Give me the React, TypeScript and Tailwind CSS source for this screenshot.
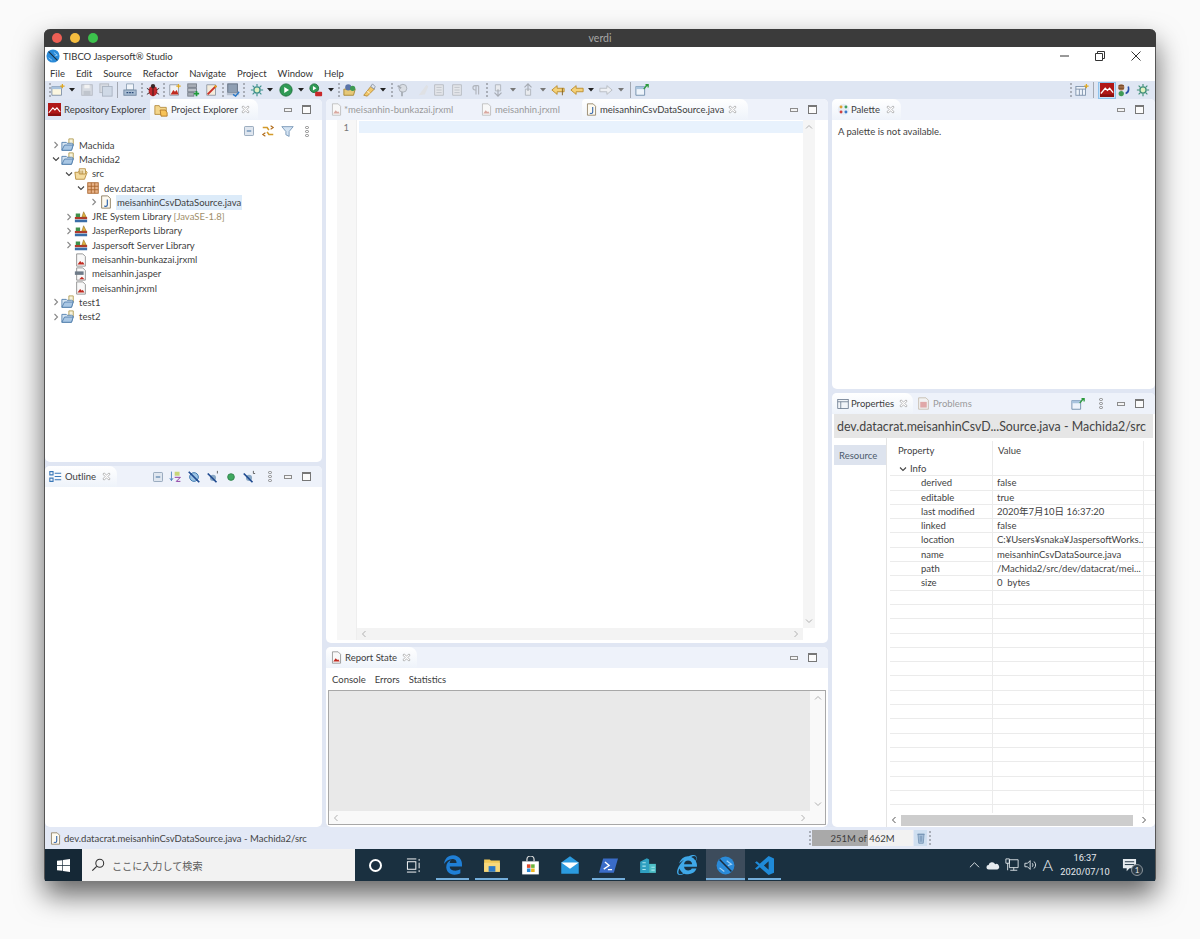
import type { ReactNode } from "react";
import { FaEdgeLegacy, FaInternetExplorer } from "react-icons/fa6";

const FONT = "font-['Lato','Noto_Sans_CJK_JP',sans-serif]";

function Ico({ children, size = 14, className = "" }: { children: ReactNode; size?: number; className?: string }) {
  return (
    <svg viewBox="0 0 16 16" width={size} height={size} className={`shrink-0 ${className}`} fill="none">
      {children}
    </svg>
  );
}

/* ---------- eclipse icons ---------- */
const Mountain = ({ size = 14, className = "" }: { size?: number; className?: string }) => (
  <Ico size={size} className={className}>
    <rect x="0" y="0" width="16" height="16" fill="#b01818" />
    <path d="M1 12 L6 6 L8.5 8.5 L11 6 L15 11" stroke="#fff" strokeWidth="1.4" />
    <rect x="0" y="13" width="16" height="3" fill="#8a1010" />
  </Ico>
);
const HandFolder = () => (
  <Ico>
    <path d="M1 3h5l1 2h7v8H1z" fill="#f3d68c" stroke="#b48a3c" />
    <path d="M7 8h6l2 3v4H8z" fill="#f7c35a" stroke="#b0772a" />
  </Ico>
);
const JavaFile = ({ size = 14 }: { size?: number }) => (
  <Ico size={size}>
    <path d="M3 1h7l3 3v11H3z" fill="#fdfaf0" stroke="#8a7a5c" />
    <path d="M9.5 5v6.5q0 1.5-2 1.5-1 0-1.500-.7" stroke="#2a5fa8" strokeWidth="1.3" />
  </Ico>
);
const ReportFile = ({ gray = false, size = 14 }: { gray?: boolean; size?: number }) => (
  <Ico size={size}>
    <path d="M3 1h7l3 3v11H3z" fill="#f8f8f8" stroke={gray ? "#b9b9b9" : "#8d8d8d"} />
    <path d="M4 13l3-4 2 2 1-1 2 3z" fill={gray ? "#d9a8a0" : "#c02a20"} />
  </Ico>
);
const JasperFile = () => (
  <Ico>
    <path d="M3 1h7l3 3v11H3z" fill="#f8f8f8" stroke="#8d8d8d" />
    <rect x="1" y="5" width="10" height="4" fill="#6f7b88" />
    <path d="M6 14l3-3 3 3z" fill="#c02a20" />
  </Ico>
);
const ProjectFolder = () => (
  <Ico>
    <path d="M9 1h5v7H9z" fill="#f7f3dc" stroke="#b09a50" />
    <path d="M1 5h5l1 1h5l2 1-2 7H1z" fill="#d5e4f2" stroke="#4f7daa" />
    <path d="M1 14l3-6h10l-2 6z" fill="#a9c7e4" stroke="#4f7daa" />
  </Ico>
);
const SrcFolder = () => (
  <Ico>
    <path d="M1 6h4l1-2h7l2 2-3 8H2z" fill="#f4dca0" stroke="#b58a3a" />
    <path d="M6 2h7v6H6z" fill="#f9efd0" stroke="#b58a3a" />
    <path d="M8 4v4M10 4v4" stroke="#b58a3a" />
  </Ico>
);
const PackageIcon = () => (
  <Ico>
    <rect x="2" y="2" width="12" height="12" fill="#e8b48a" stroke="#a8642c" />
    <path d="M6 2v12M10 2v12M2 6h12M2 10h12" stroke="#a8642c" />
  </Ico>
);
const LibIcon = () => (
  <Ico>
    <rect x="1" y="8" width="14" height="2.500" fill="#b23a2a" />
    <rect x="1" y="11" width="14" height="3" fill="#3a6ea8" />
    <path d="M9 8l2-6 3 6z" fill="#e0b040" stroke="#8a6a20" strokeWidth=".6" />
    <rect x="2" y="4" width="5" height="4" fill="#3f8f4a" />
  </Ico>
);
const Chevron = ({ open = false }: { open?: boolean }) => (
  <svg viewBox="0 0 8 8" width="8" height="8" fill="none" className="shrink-0">
    <path d={open ? "M1 2.500 L4 5.500 L7 2.500" : "M2.500 1 L5.500 4 L2.500 7"} stroke={open ? "#444" : "#888"} strokeWidth="1.100" />
  </svg>
);
const Close = () => (
  <svg viewBox="0 0 10 10" width="9" height="9" fill="none" className="shrink-0 ml-auto">
    <path d="M1.500 1.500h1.500L5 3.500 7 1.500h1.500v1.500L6.500 5l2 2v1.500H7L5 6.500 3 8.500H1.500V7l2-2-2-2z" stroke="#9a9a9a" strokeWidth=".8" fill="#fff" />
  </svg>
);
const MinMax = ({ className = "" }: { className?: string }) => (
  <div className={`flex items-center gap-[10px] ${className}`}>
    <div className="w-[8px] h-[4px] border border-[#8c8c8c] bg-[#f4f4f4]" />
    <div className="w-[9px] h-[9px] border border-[#777] border-t-2 bg-[#fbfbfb]" />
  </div>
);
const Kebab = ({ className = "" }: { className?: string }) => (
  <div className={`flex flex-col gap-[1px] ${className}`}>
    <div className="w-[4px] h-[3px] rounded-full border border-[#888]" />
    <div className="w-[4px] h-[3px] rounded-full border border-[#888]" />
    <div className="w-[4px] h-[3px] rounded-full border border-[#888]" />
  </div>
);
const Collapse = () => (
  <Ico size={12}>
    <rect x="2" y="2" width="12" height="12" rx="1" fill="#dfe6ef" stroke="#8197ad" />
    <path d="M5 8h6" stroke="#3f6f9f" strokeWidth="1.500" />
  </Ico>
);
const Link = () => (
  <Ico size={14}>
    <path d="M2 4h5l2 3M14 12H9L7 9" stroke="#d39a2a" strokeWidth="1.800" />
    <path d="M11 2l3 2-3 2M5 10l-3 2 3 2" stroke="#b06a18" strokeWidth="1.200" />
  </Ico>
);
const Filter = () => (
  <Ico size={13}>
    <path d="M1 2h14L10 8v6l-4-2V8z" fill="#d3e3f2" stroke="#6c8fb2" />
  </Ico>
);
const NewPin = () => (
  <Ico>
    <path d="M1 4h10v10H1z" fill="#eef4fb" stroke="#6d8aa8" />
    <path d="M1 4h10v3H1z" fill="#a9c4de" />
    <path d="M10 7l4-5M12 2h3v3" stroke="#2c9a3c" strokeWidth="1.500" />
  </Ico>
);

/* ---------- toolbar ---------- */
const Handle = ({ className = "" }: { className?: string }) => (
  <div className={`w-[2px] h-[14px] shrink-0 border-l-2 border-dotted border-[#a9aeb8] ${className}`} />
);
const Sep = ({ className = "" }: { className?: string }) => <div className={`w-[1px] h-[16px] shrink-0 bg-[#a3a8b2] ${className}`} />;
const Drop = ({ className = "", dim = false }: { className?: string; dim?: boolean }) => (
  <svg viewBox="0 0 6 4" width="6" height="4" className={`shrink-0 ${className}`}>
    <path d="M0 0h6L3 3.500z" fill={dim ? "#777" : "#222"} />
  </svg>
);
const T = ({ className = "", children }: { className?: string; children: ReactNode }) => (
  <div className={`w-[14px] h-[14px] shrink-0 ${className}`}>{children}</div>
);
const Gear = ({ c = "#3c8f8a" }: { c?: string }) => (
  <Ico>
    <circle cx="8" cy="8" r="3.500" fill="#dff0c0" stroke={c} strokeWidth="1.500" />
    <path d="M8 1v3M8 12v3M1 8h3M12 8h3M3 3l2 2M11 11l2 2M13 3l-2 2M5 11l-2 2" stroke={c} strokeWidth="1.300" />
  </Ico>
);
const DiskIcon = () => (
  <Ico>
    <rect x="2" y="2" width="12" height="12" fill="#d7dbe2" stroke="#b3b8c1" />
    <rect x="5" y="2" width="6" height="4" fill="#f2f2f2" />
    <rect x="4" y="9" width="8" height="5" fill="#c0c5cd" />
  </Ico>
);
const GrayDoc = () => (
  <Ico>
    <path d="M3 2h10v12H3z" fill="#e4e6ea" stroke="#b5b9c0" />
    <path d="M5 5h6M5 8h6M5 11h6" stroke="#bcc0c7" />
  </Ico>
);
const Arrow = ({ dir, on = true }: { dir: "l" | "r"; on?: boolean }) => (
  <Ico>
    <path
      d={dir === "l" ? "M1 8l6-5v3h8v4H7v3z" : "M15 8L9 3v3H1v4h8v3z"}
      fill={on ? "#f5d27a" : "#eef0f4"}
      stroke={on ? "#b98a2a" : "#b5b9c0"}
    />
  </Ico>
);

function Toolbar() {
  return (
    <div className="flex items-center h-[18px] bg-[#dfe6f3]">
      <Handle className="ml-[4px]" />
      <T><Ico><path d="M1 4h11v10H1z" fill="#fbf6e0" stroke="#7e8fa6" /><path d="M1 4h11v3H1z" fill="#a8c2de" /><path d="M13 1v5M10.500 3.500h5" stroke="#e0a820" strokeWidth="1.400" /></Ico></T>
      <Drop className="ml-[4px]" />
      <T className="ml-[5px]"><DiskIcon /></T>
      <T className="ml-[5px]"><Ico><rect x="1" y="1" width="10" height="10" fill="#d7dbe2" stroke="#b3b8c1" /><rect x="4" y="4" width="11" height="11" fill="#cfd9e6" stroke="#a8b2c0" /></Ico></T>
      <Sep className="ml-[4px]" />
      <T className="ml-[5px]"><Ico><path d="M4 1h8v7H4z" fill="#f0f4fa" stroke="#8ea0b5" /><rect x="1" y="8" width="14" height="6" fill="#a9bdd3" stroke="#6f86a0" /><path d="M4 11h8" stroke="#2a4a78" strokeWidth="1.500" strokeDasharray="2 1" /></Ico></T>
      <Handle className="ml-[4px]" />
      <T className="ml-[3px]"><Ico><ellipse cx="8" cy="9" rx="5" ry="6" fill="#c0282c" /><circle cx="8" cy="3.500" r="2.500" fill="#3a2a2a" /><path d="M8 4v11M1 6l3 2M15 6l-3 2M1 13l3-2M15 13l-3-2" stroke="#2a1a1a" /></Ico></T>
      <Handle className="ml-[3px]" />
      <T className="ml-[3px]"><Ico><path d="M2 2h10v12H2z" fill="#f2f3f5" stroke="#8d96a3" /><path d="M3 13l3-5 2 2 2-2 2 5z" fill="#c02a20" /><path d="M12 1v5M9.500 3.500h5" stroke="#e0a820" strokeWidth="1.300" /></Ico></T>
      <T className="ml-[4px]"><Ico><rect x="2" y="1" width="10" height="4" fill="#a7adb6" stroke="#757c87" /><rect x="2" y="6" width="10" height="4" fill="#b9bec6" stroke="#757c87" /><rect x="2" y="11" width="7" height="4" fill="#a7adb6" stroke="#757c87" /><path d="M12 9v6M9 12h6" stroke="#1f9a3a" strokeWidth="2" /></Ico></T>
      <T className="ml-[5px]"><Ico><path d="M2 2h10v12H2z" fill="#f4ecdc" stroke="#8d96a3" /><path d="M3 13l10-10" stroke="#c8322a" strokeWidth="2.200" /><path d="M11 3l2 2" stroke="#e0a820" strokeWidth="2" /></Ico></T>
      <Handle className="ml-[3px]" />
      <T className="ml-[2px]"><Ico><rect x="2" y="1" width="11" height="10" fill="#8f9fb3" stroke="#5d6a7d" /><rect x="1" y="11" width="14" height="3" fill="#b7c1cf" /><path d="M8 13l3 2 4-5" stroke="#2a78c8" strokeWidth="1.600" /></Ico></T>
      <Handle className="ml-[3px]" />
      <T className="ml-[5px]"><Gear /></T>
      <Drop className="ml-[3px]" />
      <T className="ml-[6px]"><Ico><circle cx="8" cy="8" r="7" fill="#2f9a55" stroke="#1e6f3c" /><path d="M6 4.500l5.500 3.500L6 11.500z" fill="#fff" /></Ico></T>
      <Drop className="ml-[5px]" />
      <T className="ml-[5px]"><Ico><circle cx="6" cy="6" r="5" fill="#2f9a55" stroke="#1e6f3c" /><path d="M4.500 3.500l4 2.500-4 2.500z" fill="#fff" /><rect x="7" y="10" width="8" height="5" rx="1" fill="#c8282a" /></Ico></T>
      <Drop className="ml-[5px]" />
      <Handle className="ml-[4px]" />
      <T className="ml-[3px]"><Ico><path d="M1 7h13l-2 7H1z" fill="#e6c878" stroke="#a5842f" /><circle cx="6" cy="5" r="3.500" fill="#5a74a8" /><circle cx="11" cy="6" r="3" fill="#3f9a55" /></Ico></T>
      <T className="ml-[5px]"><Ico><path d="M2 14L10 4l4 3-8 8z" fill="#f2c86a" stroke="#b58a3a" /><path d="M10 4l2-3 3 3-1 3z" fill="#dfe4ec" stroke="#8c95a3" /><path d="M6 9l3 3" stroke="#fff" /></Ico></T>
      <Drop className="ml-[4px]" />
      <Handle className="ml-[5px]" />
      <T className="ml-[2px]"><Ico><circle cx="9" cy="6" r="4.500" fill="#d9dde3" stroke="#a6abb3" /><path d="M8 10v5M3 3l4 3" stroke="#a6abb3" strokeWidth="2" /></Ico></T>
      <T className="ml-[7px]"><Ico><path d="M3 14L12 2l2 2-4 9z" fill="#dfe1e5" /></Ico></T>
      <T className="ml-[2px]"><GrayDoc /></T>
      <T className="ml-[4px]"><GrayDoc /></T>
      <T className="ml-[5px]"><Ico><path d="M11 3v10M8 3v10M11 3H7a2.500 2.500 0 000 5h1" stroke="#b0b4bb" strokeWidth="1.300" /></Ico></T>
      <Handle className="ml-[3px]" />
      <T className="ml-[3px]"><Ico><path d="M5 2h6v7H5z" fill="#e8eaee" stroke="#adb2ba" /><path d="M8 7v7M4 11l4 4 4-4" stroke="#a6abb3" strokeWidth="1.300" /></Ico></T>
      <Drop dim className="ml-[5px]" />
      <T className="ml-[5px]"><Ico><path d="M5 7h6v7H5z" fill="#e8eaee" stroke="#adb2ba" /><path d="M8 9V2M4 5l4-4 4 4" stroke="#a6abb3" strokeWidth="1.300" /></Ico></T>
      <Drop dim className="ml-[5px]" />
      <T className="ml-[5px]"><Ico><path d="M1 8l6-5v3h8v4H7v3z" fill="#f5d27a" stroke="#b98a2a" /><path d="M13 6v8" stroke="#7a5a1a" /></Ico></T>
      <T className="ml-[5px]"><Arrow dir="l" /></T>
      <Drop className="ml-[4px]" />
      <T className="ml-[5px]"><Arrow dir="r" on={false} /></T>
      <Drop dim className="ml-[5px]" />
      <Sep className="ml-[6px]" />
      <T className="ml-[4px]"><NewPin /></T>
      <Handle className="ml-auto" />
      <T className="ml-[3px]"><Ico><rect x="1" y="4" width="11" height="10" fill="#eef3fa" stroke="#7a8fa8" /><path d="M1 7h11M5 7v7M8.500 7v7" stroke="#7a8fa8" /><path d="M13 1v5M10.500 3.500h5" stroke="#e0a820" strokeWidth="1.400" /></Ico></T>
      <Sep className="ml-[4px]" />
      <div className="ml-[4px] w-[18px] h-[17px] flex items-center justify-center bg-[#c5e0f7] border border-[#8ec2ec] shrink-0"><Mountain size={14} /></div>
      <T className="ml-[0px]"><Ico><circle cx="6" cy="5" r="3.500" fill="#a5704a" /><path d="M3 3h6M3 6h6" stroke="#6d4326" /><circle cx="6" cy="12" r="3" fill="#3f9a55" /><path d="M11 12c3-1 4-4 3-8" stroke="#2a4fa8" strokeWidth="1.800" /></Ico></T>
      <T className="mx-[5px] ml-[6px]"><Gear c="#3f8f78" /></T>
    </div>
  );
}

/* ---------- panels ---------- */
function Tab({ icon, label, className = "", gap = "gap-[3px]" }: { icon: ReactNode; label: string; className?: string; gap?: string }) {
  return (
    <div className={`flex items-center h-full shrink-0 bg-gradient-to-b from-[#ffffff] to-[#eef3fa] rounded-tr-[8px] rounded-tl-[4px] ${gap} ${className}`}>
      {icon}
      <span className="whitespace-nowrap text-[#3d3d3d]">{label}</span>
      <Close />
    </div>
  );
}

function Panel({ header, className = "", children }: { header: ReactNode; className?: string; children: ReactNode }) {
  return (
    <section className={`flex flex-col min-h-0 rounded-[5px] overflow-hidden bg-white ${className}`}>
      <div className="flex items-center h-[21px] shrink-0 bg-[#eef2fa]">{header}</div>
      {children}
    </section>
  );
}

function TreeRow({ ml, chevron, icon, children, selected = false }: { ml: string; chevron?: "open" | "closed"; icon: ReactNode; children: ReactNode; selected?: boolean }) {
  return (
    <div className={`flex items-center h-[14.3px] ${ml}`}>
      <div className="w-[8px] shrink-0">{chevron && <Chevron open={chevron === "open"} />}</div>
      <div className="ml-[1px]">{icon}</div>
      <div className={`ml-[3px] px-[1px] whitespace-nowrap text-[#3f3f3f] ${selected ? "bg-[#dcebf9]" : ""}`}>{children}</div>
    </div>
  );
}

function ProjectTree() {
  return (
    <div className="pt-[18px]">
      <TreeRow ml="ml-[7px]" chevron="closed" icon={<ProjectFolder />}>Machida</TreeRow>
      <TreeRow ml="ml-[7px]" chevron="open" icon={<ProjectFolder />}>Machida2</TreeRow>
      <TreeRow ml="ml-[20px]" chevron="open" icon={<SrcFolder />}>src</TreeRow>
      <TreeRow ml="ml-[32px]" chevron="open" icon={<PackageIcon />}>dev.datacrat</TreeRow>
      <TreeRow ml="ml-[45px]" chevron="closed" icon={<JavaFile />} selected>meisanhinCsvDataSource.java</TreeRow>
      <TreeRow ml="ml-[20px]" chevron="closed" icon={<LibIcon />}>JRE System Library <span className="text-[#a08e6a]">[JavaSE-1.8]</span></TreeRow>
      <TreeRow ml="ml-[20px]" chevron="closed" icon={<LibIcon />}>JasperReports Library</TreeRow>
      <TreeRow ml="ml-[20px]" chevron="closed" icon={<LibIcon />}>Jaspersoft Server Library</TreeRow>
      <TreeRow ml="ml-[20px]" icon={<ReportFile />}>meisanhin-bunkazai.jrxml</TreeRow>
      <TreeRow ml="ml-[20px]" icon={<JasperFile />}>meisanhin.jasper</TreeRow>
      <TreeRow ml="ml-[20px]" icon={<ReportFile />}>meisanhin.jrxml</TreeRow>
      <TreeRow ml="ml-[7px]" chevron="closed" icon={<ProjectFolder />}>test1</TreeRow>
      <TreeRow ml="ml-[7px]" chevron="closed" icon={<ProjectFolder />}>test2</TreeRow>
    </div>
  );
}

function LeftColumn() {
  return (
    <div className="w-[277px] shrink-0 flex flex-col gap-[4px]">
      <Panel
        className="h-[363px] relative"
        header={
          <>
            <div className="flex items-center gap-[3px] pl-[3px] w-[105px] h-full bg-[#dde5f3] shrink-0">
              <Mountain size={13} />
              <span className="text-[#3d3d3d] whitespace-nowrap">Repository Explorer</span>
            </div>
            <Tab className="w-[108px] pl-[4px] pr-[8px]" icon={<HandFolder />} label="Project Explorer" />
            <MinMax className="ml-auto mr-[11px]" />
          </>
        }
      >
        <div className="absolute right-[13px] top-[25px] flex items-center gap-[6px]">
          <Collapse />
          <Link />
          <Filter />
          <Kebab className="ml-[5px]" />
        </div>
        <ProjectTree />
      </Panel>
      <Panel
        className="flex-1"
        header={
          <>
            <Tab
              className="w-[72px] pl-[4px] pr-[6px]"
              gap="gap-[3px]"
              icon={
                <Ico size={13}>
                  <path d="M1 2h4v4H1zM1 10h4v4H1z" stroke="#3a78b8" strokeWidth="1.300" />
                  <path d="M7 4h8M7 8h8M7 12h8" stroke="#3a78b8" strokeWidth="1.300" />
                </Ico>
              }
              label="Outline"
            />
            <div className="ml-[35px] flex items-center gap-[5px]">
              <Collapse />
              <Ico size={13}>
                <path d="M3 2v11M1 10l2 3 2-3" stroke="#3a78b8" />
                <path d="M7 2h6v5H7z" fill="#c8d67a" />
                <path d="M7 9h7l-5 5h5" stroke="#8a3aa0" strokeWidth="1.200" />
              </Ico>
              <Ico size={14}>
                <circle cx="8" cy="8" r="5" fill="#9cc4e4" stroke="#2f6ea8" />
                <path d="M2 2l12 12" stroke="#1f4a90" strokeWidth="2" />
              </Ico>
              <Ico size={14}>
                <circle cx="8" cy="9" r="3.500" fill="#8aa8c4" />
                <path d="M2 4l10 10" stroke="#1f4a90" strokeWidth="2" />
                <path d="M13 1v3" stroke="#555" />
              </Ico>
              <Ico size={12}>
                <circle cx="8" cy="8" r="4.500" fill="#3fa860" stroke="#2a7a44" />
              </Ico>
              <Ico size={14}>
                <circle cx="8" cy="9" r="3.500" fill="#8aa8c4" />
                <path d="M2 4l10 10" stroke="#1f4a90" strokeWidth="2" />
                <path d="M13 1v3h2" stroke="#555" />
              </Ico>
            </div>
            <Kebab className="ml-[12px]" />
            <MinMax className="ml-auto mr-[11px]" />
          </>
        }
      >
        <div className="flex-1" />
      </Panel>
    </div>
  );
}

function CenterColumn() {
  return (
    <div className="w-[502px] shrink-0 flex flex-col gap-[4px]">
      <Panel
        className="h-[544px]"
        header={
          <>
            <div className="flex items-center gap-[1px] ml-[4px] w-[150px] shrink-0">
              <ReportFile gray size={13} />
              <span className="text-[#9a9a9a] whitespace-nowrap">*meisanhin-bunkazai.jrxml</span>
            </div>
            <div className="flex items-center gap-[2px] w-[102px] shrink-0">
              <ReportFile gray size={13} />
              <span className="text-[#9a9a9a] whitespace-nowrap">meisanhin.jrxml</span>
            </div>
            <Tab className="w-[166px] pl-[3px] pr-[11px]" gap="gap-[2px]" icon={<JavaFile size={13} />} label="meisanhinCsvDataSource.java" />
            <MinMax className="ml-auto mr-[11px]" />
          </>
        }
      >
        <div className="flex-1 min-h-0 flex pl-[2px] pr-[13px] pb-[3px]">
          <div className="w-[9px] bg-white" />
          <div className="w-[20px] bg-[#f7f7f7] border-r border-[#eeeeee] text-right pr-[7px] pt-[1px] text-[#777] leading-[14px]">1</div>
          <div className="flex-1 min-w-0 flex flex-col">
            <div className="flex-1 flex min-h-0">
              <div className="flex-1 min-w-0 pl-[2px]">
                <div className="h-[12px] mt-[1px] bg-[#e8f2fd]" />
              </div>
              <div className="w-[12px] bg-[#f5f5f5] flex flex-col items-center justify-between py-[3px] text-[#aaa]">
                <svg viewBox="0 0 8 8" width="8" height="8" fill="none"><path d="M1 5.500 L4 2.500 L7 5.500" stroke="#b0b0b0" /></svg>
                <svg viewBox="0 0 8 8" width="8" height="8" fill="none"><path d="M1 2.500 L4 5.500 L7 2.500" stroke="#b0b0b0" /></svg>
              </div>
            </div>
            <div className="h-[12px] mr-[12px] bg-[#f3f3f3] flex items-center justify-between px-[3px]">
              <svg viewBox="0 0 8 8" width="8" height="8" fill="none"><path d="M5.500 1 L2.500 4 L5.500 7" stroke="#b0b0b0" /></svg>
              <svg viewBox="0 0 8 8" width="8" height="8" fill="none"><path d="M2.500 1 L5.500 4 L2.500 7" stroke="#b0b0b0" /></svg>
            </div>
          </div>
        </div>
      </Panel>
      <Panel
        className="flex-1"
        header={
          <>
            <Tab className="w-[91px] pl-[4px] pr-[6px]" gap="gap-[2px]" icon={<ReportFile size={13} />} label="Report State" />
            <MinMax className="ml-auto mr-[11px]" />
          </>
        }
      >
        <div className="flex items-center gap-[9px] h-[22px] shrink-0 pl-[6px] text-[#3d3d3d]">
          <span>Console</span>
          <span>Errors</span>
          <span>Statistics</span>
        </div>
        <div className="flex-1 min-h-0 mx-[2px] mb-[2px] border border-[#a8a8a8] flex flex-col">
          <div className="flex-1 flex min-h-0">
            <div className="flex-1 bg-[#e9e9e9]" />
            <div className="w-[15px] bg-[#f9f9f9] flex flex-col items-center justify-between py-[3px]">
              <svg viewBox="0 0 8 8" width="8" height="8" fill="none"><path d="M1 5.500 L4 2.500 L7 5.500" stroke="#b0b0b0" /></svg>
              <svg viewBox="0 0 8 8" width="8" height="8" fill="none"><path d="M1 2.500 L4 5.500 L7 2.500" stroke="#b0b0b0" /></svg>
            </div>
          </div>
          <div className="h-[13px] bg-[#f9f9f9] flex items-center justify-between pl-[3px] pr-[18px]">
            <svg viewBox="0 0 8 8" width="8" height="8" fill="none"><path d="M5.500 1 L2.500 4 L5.500 7" stroke="#b0b0b0" /></svg>
            <svg viewBox="0 0 8 8" width="8" height="8" fill="none"><path d="M2.500 1 L5.500 4 L2.500 7" stroke="#b0b0b0" /></svg>
          </div>
        </div>
      </Panel>
    </div>
  );
}

const PROPS = [
  ["derived", "false"],
  ["editable", "true"],
  ["last modified", "2020年7月10日 16:37:20"],
  ["linked", "false"],
  ["location", "C:¥Users¥snaka¥JaspersoftWorks..."],
  ["name", "meisanhinCsvDataSource.java"],
  ["path", "/Machida2/src/dev/datacrat/mei..."],
  ["size", "0  bytes"],
];
const EMPTY = Array.from({ length: 16 }, (_, i) => i);

function PropRow({ name, value }: { name?: string; value?: string }) {
  return (
    <div className="flex h-[14.3px] border-b border-[#ebebeb] leading-[13px] text-[#3f3f3f]">
      <div className="w-[103px] shrink-0 border-r border-[#ebebeb] pl-[31px] whitespace-nowrap">{name}</div>
      <div className="w-[151px] shrink-0 border-r border-[#ebebeb] pl-[4px] whitespace-pre overflow-hidden">{value}</div>
    </div>
  );
}

function RightColumn() {
  return (
    <div className="w-[323px] shrink-0 flex flex-col gap-[4px]">
      <Panel
        className="h-[290px]"
        header={
          <>
            <Tab
              className="w-[69px] pl-[5px] pr-[6px]"
              gap="gap-[1px]"
              icon={
                <Ico size={13}>
                  <circle cx="8" cy="8" r="7" fill="#e8eef6" />
                  <circle cx="5" cy="5" r="1.800" fill="#e0a030" />
                  <circle cx="11" cy="5" r="1.800" fill="#40a060" />
                  <circle cx="5" cy="11" r="1.800" fill="#d04040" />
                  <circle cx="11" cy="11" r="1.800" fill="#3a78c8" />
                </Ico>
              }
              label="Palette"
            />
            <MinMax className="ml-auto mr-[11px]" />
          </>
        }
      >
        <div className="pl-[6px] pt-[4px] text-[#3f3f3f]">A palette is not available.</div>
      </Panel>
      <Panel
        className="flex-1"
        header={
          <>
            <Tab
              className="w-[81px] pl-[5px] pr-[5px]"
              gap="gap-[2px]"
              icon={
                <Ico size={12}>
                  <rect x="1" y="2" width="14" height="12" fill="#f2f5f9" stroke="#5f6f84" />
                  <path d="M1 5h14M5 5v9" stroke="#5f6f84" />
                </Ico>
              }
              label="Properties"
            />
            <div className="ml-[4px] flex items-center gap-[3px]">
              <Ico size={13}>
                <path d="M2 1h9l3 3v11H2z" fill="#f2f2f2" stroke="#c2b8a8" />
                <rect x="4" y="6" width="8" height="7" fill="#e0a8a8" />
              </Ico>
              <span className="text-[#9a9a9a]">Problems</span>
            </div>
            <div className="ml-auto mr-[14px]"><NewPin /></div>
            <Kebab className="mr-[14px]" />
            <MinMax className="mr-[11px]" />
          </>
        }
      >
        <div className="h-[24px] shrink-0 mx-[2px] bg-[#e6e6e6] flex items-center pl-[3px] text-[12.400px] text-[#444] whitespace-nowrap">
          dev.datacrat.meisanhinCsvD...Source.java - Machida2/src
        </div>
        <div className="flex-1 min-h-0 flex ml-[2px]">
          <div className="w-[53px] shrink-0 pt-[7px] border-r border-[#e4e4e4]">
            <div className="h-[20px] bg-[#dde3ee] flex items-center pl-[5px] text-[#4c5a6c]">Resource</div>
          </div>
          <div className="flex-1 min-w-0 flex flex-col pl-[3px]">
            <div className="flex-1 min-h-0 overflow-hidden">
              <div className="flex h-[24px] items-center pt-[3px] text-[#3f3f3f]">
                <div className="w-[103px] h-full border-r border-[#ebebeb] pl-[8px] pb-[3px] flex items-center">Property</div>
                <div className="w-[151px] h-full border-r border-[#ebebeb] pl-[5px] pb-[3px] flex items-center">Value</div>
              </div>
              <div className="flex h-[14.3px] border-b border-[#ebebeb] leading-[13px] text-[#3f3f3f]">
                <div className="w-[103px] shrink-0 border-r border-[#ebebeb] pl-[9px] flex items-center gap-[3px]">
                  <Chevron open />
                  <span>Info</span>
                </div>
                <div className="w-[151px] shrink-0 border-r border-[#ebebeb]" />
              </div>
              {PROPS.map(([n, v]) => (
                <PropRow key={n} name={n} value={v} />
              ))}
              {EMPTY.map((i) => (
                <PropRow key={i} />
              ))}
            </div>
            <div className="h-[14px] shrink-0 -ml-[3px] bg-white flex items-center">
              <div className="w-[14px] flex justify-center"><svg viewBox="0 0 8 8" width="8" height="8" fill="none"><path d="M5.500 1 L2.500 4 L5.500 7" stroke="#555" /></svg></div>
              <div className="w-[232px] h-[11px] bg-[#cdcdcd]" />
              <div className="flex-1 flex justify-center"><svg viewBox="0 0 8 8" width="8" height="8" fill="none"><path d="M2.500 1 L5.500 4 L2.500 7" stroke="#555" /></svg></div>
            </div>
          </div>
        </div>
      </Panel>
    </div>
  );
}

function StatusBar() {
  return (
    <div className="h-[22px] shrink-0 flex items-center bg-[#e3e9f6] text-[#444]">
      <div className="ml-[4px]"><JavaFile size={13} /></div>
      <span className="ml-[2px] whitespace-nowrap">dev.datacrat.meisanhinCsvDataSource.java - Machida2/src</span>
      <Handle className="ml-auto" />
      <div className="relative w-[101px] h-[16px] bg-[#f2f2f2] ml-[1px] shrink-0">
        <div className="h-full w-[56px] bg-[#a9a9a9]" />
        <div className="absolute inset-0 flex items-center justify-center text-[#3c3c3c] whitespace-nowrap">251M of 462M</div>
      </div>
      <div className="w-[13px] h-[16px] bg-[#cfdff0] ml-[1px] flex items-center justify-center shrink-0">
        <Ico size={12}>
          <path d="M4 3h8l-1 12H5z" fill="#a9c2dc" stroke="#6c8cae" />
          <path d="M3 3h10" stroke="#6c8cae" />
          <path d="M7 5v8M9 5v8" stroke="#6c8cae" />
        </Ico>
      </div>
      <Handle className="ml-[2px] mr-[224px]" />
    </div>
  );
}

function TaskIcon({ active = false, line = true, children }: { active?: boolean; line?: boolean; children: ReactNode }) {
  return (
    <div className={`relative w-[39px] h-full flex items-center justify-center shrink-0 ${active ? "bg-[#3d4c5c]" : ""}`}>
      {children}
      {line && <div className={`absolute bottom-[1px] h-[2px] bg-[#74aedb] ${active ? "inset-x-0" : "inset-x-[3px]"}`} />}
    </div>
  );
}

const JasperLogo = ({ size = 20 }: { size?: number }) => (
  <Ico size={size}>
    <circle cx="8" cy="8" r="7.500" fill="#2a8ad8" />
    <path d="M3 3l10 10" stroke="#1c2c3c" strokeWidth="1.300" />
    <path d="M9 4l4 3-3 1M3 10l4 3" stroke="#9fd0f5" strokeWidth="1" />
  </Ico>
);

function Taskbar() {
  return (
    <div className="h-[32px] shrink-0 flex items-stretch bg-[#1a3040] text-white">
      <div className="w-[37px] flex items-center justify-center bg-[#152836] shrink-0">
        <svg viewBox="0 0 16 16" width="13" height="13">
          <path d="M0 2.300l6.500-.9v6.100H0zM7.300 1.300L16 0v7.500H7.300zM0 8.300h6.500v6.200L0 13.700zM7.300 8.300H16V16l-8.700-1.200z" fill="#fff" />
        </svg>
      </div>
      <div className="w-[273px] bg-[#f2f2f2] flex items-center pl-[9px] gap-[7px] shrink-0">
        <svg viewBox="0 0 16 16" width="14" height="14" fill="none">
          <circle cx="10" cy="6" r="4.500" stroke="#333" strokeWidth="1.200" />
          <path d="M6.500 9.500L1.500 14.500" stroke="#333" strokeWidth="1.400" />
        </svg>
        <span className="text-[10.100px] text-[#5c5c5c] font-['Noto_Sans_CJK_JP',sans-serif]">ここに入力して検索</span>
      </div>
      <div className="w-[38px] ml-[1px] flex items-center justify-center shrink-0">
        <div className="w-[13px] h-[13px] rounded-full border-2 border-white" />
      </div>
      <div className="w-[38px] flex items-center justify-center shrink-0">
        <svg viewBox="0 0 16 16" width="15" height="15" fill="none" stroke="#fff">
          <path d="M1 1h10M1 15h10" />
          <rect x="1.500" y="4" width="9" height="8" />
          <path d="M14 1v2M14 5v6M14 13v2" />
        </svg>
      </div>
      <div className="w-[1px] shrink-0" />
      <TaskIcon>
        <FaEdgeLegacy className="text-[#1f7fd6] text-[20px]" />
      </TaskIcon>
      <TaskIcon>
        <svg viewBox="0 0 16 16" width="18" height="18">
          <path d="M1 3h5l1 1h8v10H1z" fill="#f0c858" />
          <path d="M1 6h14v8H1z" fill="#f7d87c" />
          <rect x="5" y="9" width="6" height="5" fill="#2a78c8" />
        </svg>
      </TaskIcon>
      <TaskIcon line={false}>
        <svg viewBox="0 0 16 16" width="19" height="19" fill="none">
          <rect x="1" y="4.500" width="14" height="11" fill="#fff" />
          <path d="M5 4.500V3a3 3 0 016 0v1.500" stroke="#ddd" />
          <rect x="5" y="7" width="3" height="3" fill="#e04a2a" />
          <rect x="8.500" y="7" width="3" height="3" fill="#6cb33a" />
          <rect x="5" y="10.500" width="3" height="3" fill="#2a8ad8" />
          <rect x="8.500" y="10.500" width="3" height="3" fill="#f0b820" />
        </svg>
      </TaskIcon>
      <TaskIcon line={false}>
        <svg viewBox="0 0 16 16" width="20" height="20">
          <path d="M1 6l7-5 7 5v9H1z" fill="#2b9ade" />
          <path d="M1 6h14L8 11z" fill="#fff" />
        </svg>
      </TaskIcon>
      <TaskIcon>
        <svg viewBox="0 0 16 16" width="19" height="19" fill="none">
          <path d="M3.500 2H16l-3.500 12H0z" fill="#3a6cc8" />
          <path d="M5 5l3.500 3-4.500 3M7.500 11.500H11" stroke="#fff" strokeWidth="1.200" />
        </svg>
      </TaskIcon>
      <TaskIcon line={false}>
        <svg viewBox="0 0 16 16" width="18" height="18">
          <path d="M1 5l6-3 2 1v12H1z" fill="#2f9fc0" />
          <path d="M9 7h6v8H9z" fill="#4fc0c8" />
          <path d="M3 6h3M3 9h3M3 12h3M11 10h3M11 12.500h3" stroke="#a6e4ee" />
        </svg>
      </TaskIcon>
      <TaskIcon line={false}>
        <FaInternetExplorer className="text-[#3fa8e8] text-[20px]" />
      </TaskIcon>
      <TaskIcon active>
        <JasperLogo size={19} />
      </TaskIcon>
      <TaskIcon>
        <svg viewBox="0 0 16 16" width="19" height="19">
          <path d="M11.500 0L16 2v12l-4.500 2L4 9.500 1.500 11.500 0 10.500 3 8 0 5.500 1.500 4.500 4 6.500zM11.500 4.500L7.500 8l4 3.500z" fill="#1f8ad8" />
        </svg>
      </TaskIcon>
      <div className="ml-auto flex items-center text-[#e6ebef]">
        <svg viewBox="0 0 12 8" width="11" height="8" fill="none" className="mr-[6px]"><path d="M1 6.500l5-5 5 5" stroke="#e6ebef" /></svg>
        <svg viewBox="0 0 16 10" width="14" height="9" className="mr-[5px]"><path d="M3 9.500a2.500 2.500 0 010-5 4 4 0 017.500-1A3 3 0 0113 9.500z" fill="#e6ebef" /></svg>
        <svg viewBox="0 0 16 16" width="14" height="14" fill="none" stroke="#e6ebef" className="mr-[5px]"><path d="M5 2h10v9H5zM1 1h4v5H1zM3 6v8M6 14h8M10 11v3" /></svg>
        <svg viewBox="0 0 16 16" width="14" height="14" fill="none" stroke="#e6ebef" className="mr-[5px]"><path d="M1 6h3l3-3v10l-3-3H1zM9.500 6a3 3 0 010 4M11.500 4a6 6 0 010 8" /></svg>
        <span className="text-[16px] leading-none mr-[7px] font-light">A</span>
        <div className="flex flex-col items-center w-[50px] text-[9.300px] leading-[14px] font-['Roboto',sans-serif]">
          <span>16:37</span>
          <span>2020/07/10</span>
        </div>
        <div className="relative ml-[12px] mr-[18px]">
          <svg viewBox="0 0 16 16" width="15" height="15"><path d="M1 1h14v10H8l-3 3v-3H1z" fill="#e6ebef" /><path d="M3 4h10M3 7h10" stroke="#1a3040" /></svg>
          <div className="absolute -right-[6px] -bottom-[3px] w-[12px] h-[12px] rounded-full bg-[#2c3c48] border border-[#8a949c] text-[8px] leading-[10px] text-center">1</div>
        </div>
      </div>
    </div>
  );
}

export default function App() {
  return (
    <div className={`w-[1200px] h-[939px] overflow-hidden bg-[#fafafa] pt-[29px] pl-[44px] text-[9.500px] leading-[15px] ${FONT}`}>
      <div className="w-[1112px] h-[852px] flex flex-col rounded-t-[6px] rounded-b-[3px] border-x border-[#555] bg-white shadow-[0_14px_28px_rgba(0,0,0,0.6)]">
        <div className="h-[18px] shrink-0 flex items-center bg-[#3b3b3b] rounded-t-[6px] -mx-[1px] relative">
          <div className="flex items-center gap-[8px] pl-[8px]">
            <div className="w-[10px] h-[10px] rounded-full bg-[#ed5f55]" />
            <div className="w-[10px] h-[10px] rounded-full bg-[#f5bd3f]" />
            <div className="w-[10px] h-[10px] rounded-full bg-[#3cc14c]" />
          </div>
          <span className="absolute inset-x-0 text-center text-[#a8a8a8] text-[10.500px]">verdi</span>
        </div>
        <div className="h-[18px] shrink-0 flex items-center pl-[1px] text-[#333]">
          <JasperLogo size={14} />
          <span className="ml-[3px]">TIBCO Jaspersoft® Studio</span>
          <div className="ml-auto flex items-center">
            <svg viewBox="0 0 10 10" width="10" height="10" className="mr-[25px]" fill="none"><path d="M0 5h9" stroke="#333" /></svg>
            <svg viewBox="0 0 10 10" width="10" height="10" className="mr-[26px]" fill="none" stroke="#333"><path d="M2.500 2.500V.5h7v7h-2M.5 2.500h7v7h-7z" /></svg>
            <svg viewBox="0 0 10 10" width="10" height="10" className="mr-[14px]" fill="none" stroke="#333"><path d="M.5 .5l9 9M9.500 .5l-9 9" /></svg>
          </div>
        </div>
        <div className="h-[16px] shrink-0 flex items-center gap-[11px] pl-[5px] text-[#333]">
          <span>File</span>
          <span>Edit</span>
          <span>Source</span>
          <span>Refactor</span>
          <span>Navigate</span>
          <span>Project</span>
          <span>Window</span>
          <span>Help</span>
        </div>
        <Toolbar />
        <div className="flex-1 min-h-0 flex gap-[4px] bg-[#e0e6f3]">
          <LeftColumn />
          <CenterColumn />
          <RightColumn />
        </div>
        <StatusBar />
        <Taskbar />
      </div>
    </div>
  );
}
